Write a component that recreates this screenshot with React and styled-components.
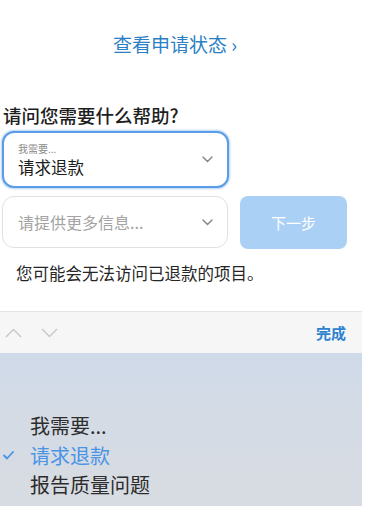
import React from "react";
import styled, { createGlobalStyle } from "styled-components";

const GlobalStyle = createGlobalStyle`
  body {
    margin: 0;
    background: #ffffff;
    font-family: "Noto Sans CJK SC", "Noto Sans", sans-serif;
  }
`;

const Page = styled.div`
  width: 362px;
  height: 506px;
  display: flex;
  flex-direction: column;
  background: #ffffff;
  overflow: hidden;
`;

const StatusLink = styled.a`
  display: block;
  margin-top: 32px;
  padding-right: 12px;
  text-align: center;
  font-size: 19px;
  line-height: 24px;
  color: #2b80c5;
  text-decoration: none;
`;

const Heading = styled.h2`
  margin: 47px 0 0 3px;
  font-size: 18.5px;
  line-height: 24px;
  font-weight: 500;
  color: #1e1e1e;
`;

const Form = styled.div`
  display: flex;
  flex-direction: column;
  gap: 8px;
  margin: 4px 0 0 2px;
`;

const Row = styled.div`
  display: flex;
  gap: 12px;
`;

const Select = styled.div`
  box-sizing: border-box;
  width: ${(p) => (p.$active ? "227px" : "226px")};
  height: ${(p) => (p.$active ? "57px" : "52px")};
  border: ${(p) => (p.$active ? "2.5px solid #5a9de6" : "1px solid #e1e1e1")};
  box-shadow: ${(p) => (p.$active ? "0 0 2px 1px rgba(90,157,230,0.45)" : "none")};
  border-radius: 12px;
  display: flex;
  align-items: center;
  justify-content: space-between;
  padding: 0 14px 0 ${(p) => (p.$active ? "14px" : "15px")};
  background: #fff;
`;

const SelectText = styled.div`
  display: flex;
  flex-direction: column;
  gap: 2px;
`;

const SmallLabel = styled.span`
  font-size: 10px;
  line-height: 13px;
  color: #8a8a8a;
`;

const Value = styled.span`
  font-size: ${(p) => (p.$placeholder ? "16px" : "16.5px")};
  line-height: 21px;
  color: ${(p) => (p.$placeholder ? "#a3a3a3" : "#1c1c1c")};
`;

const Chevron = styled.svg`
  width: 11px;
  height: 7px;
  flex-shrink: 0;
`;

const NextButton = styled.button`
  width: 107px;
  height: 53px;
  border: none;
  border-radius: 8px;
  background: #abd0f6;
  color: #ffffff;
  font-family: inherit;
  font-size: 15px;
`;

const Note = styled.p`
  margin: 13px 0 0 16px;
  font-size: 16.5px;
  line-height: 22px;
  color: #262626;
`;

const Toolbar = styled.div`
  margin-top: 27px;
  height: 42px;
  box-sizing: border-box;
  border-top: 1px solid #e3e3e5;
  background: #f6f6f7;
  display: flex;
  align-items: center;
  padding: 0 16px 0 5px;
`;

const Arrows = styled.div`
  display: flex;
  gap: 19px;
  flex: 1;
`;

const Arrow = styled.svg`
  width: 17px;
  height: 10px;
`;

const Done = styled.span`
  font-size: 15px;
  font-weight: 700;
  color: #2f82cf;
`;

const Picker = styled.div`
  flex: 1;
  background: linear-gradient(180deg, #cfdaea 0%, #d4dbe5 40%, #d8dce2 100%);
  display: flex;
  flex-direction: column;
  padding-top: 58px;
`;

const Option = styled.div`
  display: flex;
  align-items: center;
  height: 29.5px;
  font-size: 20px;
  color: ${(p) => (p.$selected ? "#4a94e6" : "#2d2d2d")};
`;

const CheckSlot = styled.span`
  width: 30px;
  display: flex;
  padding-left: 3px;
  box-sizing: border-box;
`;

const ChevronDown = ({ color = "#8a8a8a" }) => (
  <Chevron viewBox="0 0 11 7">
    <path d="M1 1l4.5 4.5L10 1" fill="none" stroke={color} strokeWidth="1.5" strokeLinecap="round" strokeLinejoin="round" />
  </Chevron>
);

const options = [
  { label: "我需要...", selected: false },
  { label: "请求退款", selected: true },
  { label: "报告质量问题", selected: false },
];

export default function App() {
  return (
    <Page>
      <GlobalStyle />
      <StatusLink href="#">查看申请状态 ›</StatusLink>
      <Heading>请问您需要什么帮助?</Heading>
      <Form>
        <Select $active>
          <SelectText>
            <SmallLabel>我需要...</SmallLabel>
            <Value>请求退款</Value>
          </SelectText>
          <ChevronDown />
        </Select>
        <Row>
          <Select>
            <Value $placeholder>请提供更多信息...</Value>
            <ChevronDown />
          </Select>
          <NextButton>下一步</NextButton>
        </Row>
      </Form>
      <Note>您可能会无法访问已退款的项目。</Note>
      <Toolbar>
        <Arrows>
          <Arrow viewBox="0 0 17 10">
            <path d="M1 9l7.5-7.5L16 9" fill="none" stroke="#c6c6c9" strokeWidth="1.3" />
          </Arrow>
          <Arrow viewBox="0 0 17 10">
            <path d="M1 1l7.5 7.5L16 1" fill="none" stroke="#c6c6c9" strokeWidth="1.3" />
          </Arrow>
        </Arrows>
        <Done>完成</Done>
      </Toolbar>
      <Picker>
        {options.map((o) => (
          <Option key={o.label} $selected={o.selected}>
            <CheckSlot>
              {o.selected && (
                <svg width="11" height="9" viewBox="0 0 11 9">
                  <path d="M1 4.5l3 3L10 1" fill="none" stroke="#4a94e6" strokeWidth="1.8" strokeLinecap="round" strokeLinejoin="round" />
                </svg>
              )}
            </CheckSlot>
            {o.label}
          </Option>
        ))}
      </Picker>
    </Page>
  );
}
